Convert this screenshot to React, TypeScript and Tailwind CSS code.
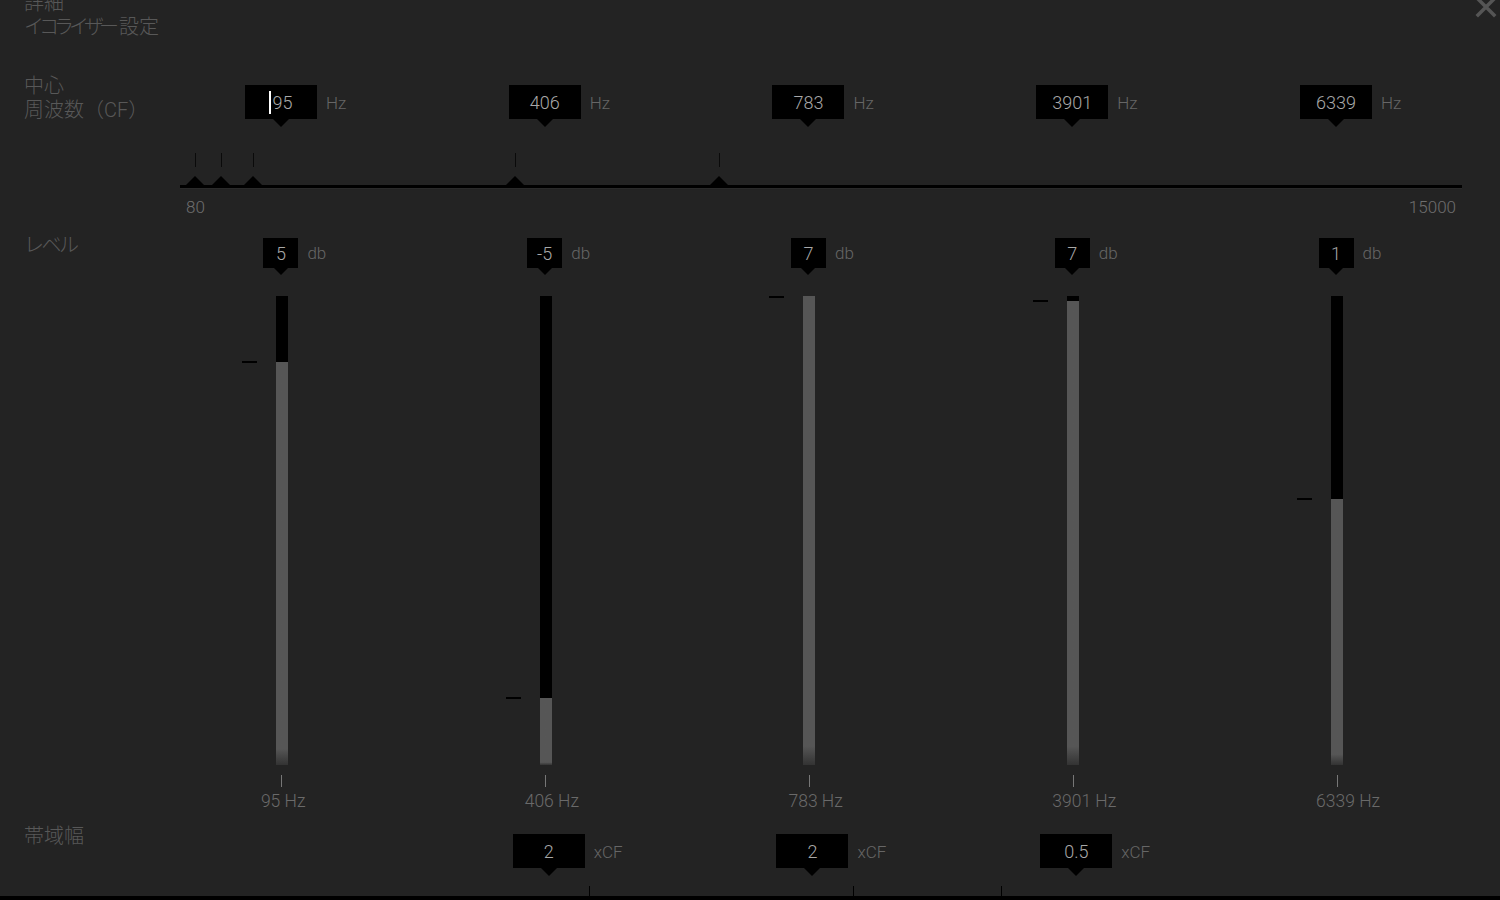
import React from "react";

const FONT = { fontFamily: '"Roboto", "Noto Sans CJK JP", "Noto Sans", sans-serif' };

type Band = { cf: string; db: string; offset: number; label: string; bw?: string };

const bands: Band[] = [
  { cf: "95", db: "5", offset: 66, label: "95 Hz" },
  { cf: "406", db: "-5", offset: 402, label: "406 Hz", bw: "2" },
  { cf: "783", db: "7", offset: 0, label: "783 Hz", bw: "2" },
  { cf: "3901", db: "7", offset: 5, label: "3901 Hz", bw: "0.5" },
  { cf: "6339", db: "1", offset: 203, label: "6339 Hz" },
];

const cfMarks = [15, 41, 73, 335, 539];

function Pointer({ size = 7 }: { size?: number }) {
  return size === 7 ? (
    <div className="h-0 w-0 border-x-[7px] border-t-[7px] border-x-transparent border-t-black" />
  ) : (
    <div className="h-0 w-0 border-x-[8px] border-t-[8px] border-x-transparent border-t-black" />
  );
}

function ValueBox({ value, unit, cursor, small }: { value: string; unit: string; cursor?: boolean; small?: boolean }) {
  return (
    <div className="grid grid-cols-[1fr_auto_1fr] items-start">
      <div />
      <div className="flex flex-col items-center">
        <div
          className={
            small
              ? "flex h-[30px] w-[35px] items-center justify-center bg-black text-[18px] text-[#a8a8a8]"
              : "flex h-[34px] w-[72px] items-center justify-center bg-black text-[18px] text-[#a8a8a8]"
          }
        >
          {cursor && <span className="mr-[1px] h-[23px] w-[2px] bg-white" />}
          <span>{value}</span>
        </div>
        <Pointer size={small ? 7 : 8} />
      </div>
      <div className={small ? "pl-[9px] pt-[3px] text-[17px] leading-[24px] text-[#666]" : "pl-[9px] pt-[6px] text-[17px] leading-[24px] text-[#666]"}>
        {unit}
      </div>
    </div>
  );
}

function VSlider({ offset }: { offset: number }) {
  return (
    <div className="relative ml-[2px] h-[469px] w-[12px]">
      <div className="flex h-full w-full flex-col blur-[0.7px]">
        <div className="w-full bg-black" style={{ height: offset }} />
        <div className="w-full flex-1 bg-gradient-to-b from-[#565656] from-[96%] to-[#333]" />
      </div>
      <div className="absolute left-[-34px] h-[2px] w-[15px] bg-black" style={{ top: Math.max(offset - 1, 0) }} />
    </div>
  );
}

export default function App() {
  return (
    <div className="relative flex h-[900px] w-[1500px] flex-col overflow-hidden bg-[#232323] font-light" style={FONT}>
      {/* title */}
      <div className="mt-[-9px] pl-6 text-[20px] leading-[24px] text-[#585858]">
        <div>詳細</div>
        <div>
          <span className="tracking-[-5px]">イコライザー</span>
          <span className="ml-[5px]">設定</span>
        </div>
      </div>
      <div className="absolute right-[3px] top-[-4px] text-[#555]">
        <svg width="22" height="22" viewBox="0 0 22 22">
          <path d="M3 3 L19 19 M19 3 L3 19" stroke="currentColor" strokeWidth="3.5" strokeLinecap="square" />
        </svg>
      </div>

      {/* center frequency */}
      <div className="mt-[35px] flex h-[48px] items-start">
        <div className="w-[149px] pl-6 text-[20px] leading-[24px] text-[#585858]">
          <div>中心</div>
          <div>周波数（CF）</div>
        </div>
        <div className="grid w-[1319px] grid-cols-5 pt-[11px]">
          {bands.map((b, i) => (
            <ValueBox key={i} value={b.cf} unit="Hz" cursor={i === 0} />
          ))}
        </div>
      </div>

      {/* frequency track */}
      <div className="ml-[180px] w-[1282px]">
        <div className="relative h-[63px]">
          {cfMarks.map((x, i) => (
            <React.Fragment key={i}>
              <div className="absolute top-[31px] h-[14px] w-px bg-[#0a0a0a]" style={{ left: x }} />
              <div
                className="absolute bottom-0 h-0 w-0 border-x-[9px] border-b-[9px] border-x-transparent border-b-black"
                style={{ left: x - 9 }}
              />
            </React.Fragment>
          ))}
        </div>
        <div className="h-[3px] bg-black" />
        <div className="h-px bg-[#2a2a2a]" />
        <div className="mt-[8px] flex justify-between pl-[6px] pr-[6px] text-[17px] leading-[20px] text-[#6e6e6e]">
          <span>80</span>
          <span>15000</span>
        </div>
      </div>

      {/* level */}
      <div className="mt-[15px] flex">
        <div className="w-[149px] pl-6 pt-[1px] text-[20px] leading-[24px] text-[#585858] tracking-[-2.5px]">レベル</div>
        <div className="grid w-[1319px] grid-cols-5 pt-[6px]">
          {bands.map((b, i) => (
            <div key={i} className="flex flex-col items-center">
              <ValueBox value={b.db} unit="db" small />
              <div className="mt-[21px]">
                <VSlider offset={b.offset} />
              </div>
              <div className="ml-[2px] mt-[10px] h-[12px] w-px bg-[#777]" />
              <div className="mt-[4px] w-[90px] whitespace-nowrap pl-[25px] text-[17.5px] leading-[20px] text-[#6a6a6a]">
                {b.label}
              </div>
            </div>
          ))}
        </div>
      </div>

      {/* bandwidth */}
      <div className="mt-[13px] flex">
        <div className="w-[149px] pl-6 text-[20px] leading-[24px] text-[#585858]">帯域幅</div>
        <div className="grid w-[1319px] grid-cols-5 pt-[10px]">
          {bands.map((b, i) => (
            <div key={i} className="pl-[8px]">
              {b.bw && <ValueBox value={b.bw} unit="xCF" />}
            </div>
          ))}
        </div>
      </div>

      {/* bottom */}
      <div className="mt-auto">
        <div className="relative h-[10px]">
          {[589, 853, 1001].map((x) => (
            <div key={x} className="absolute top-0 h-[10px] w-px bg-black" style={{ left: x }} />
          ))}
        </div>
        <div className="h-[4px] bg-black" />
      </div>
    </div>
  );
}
